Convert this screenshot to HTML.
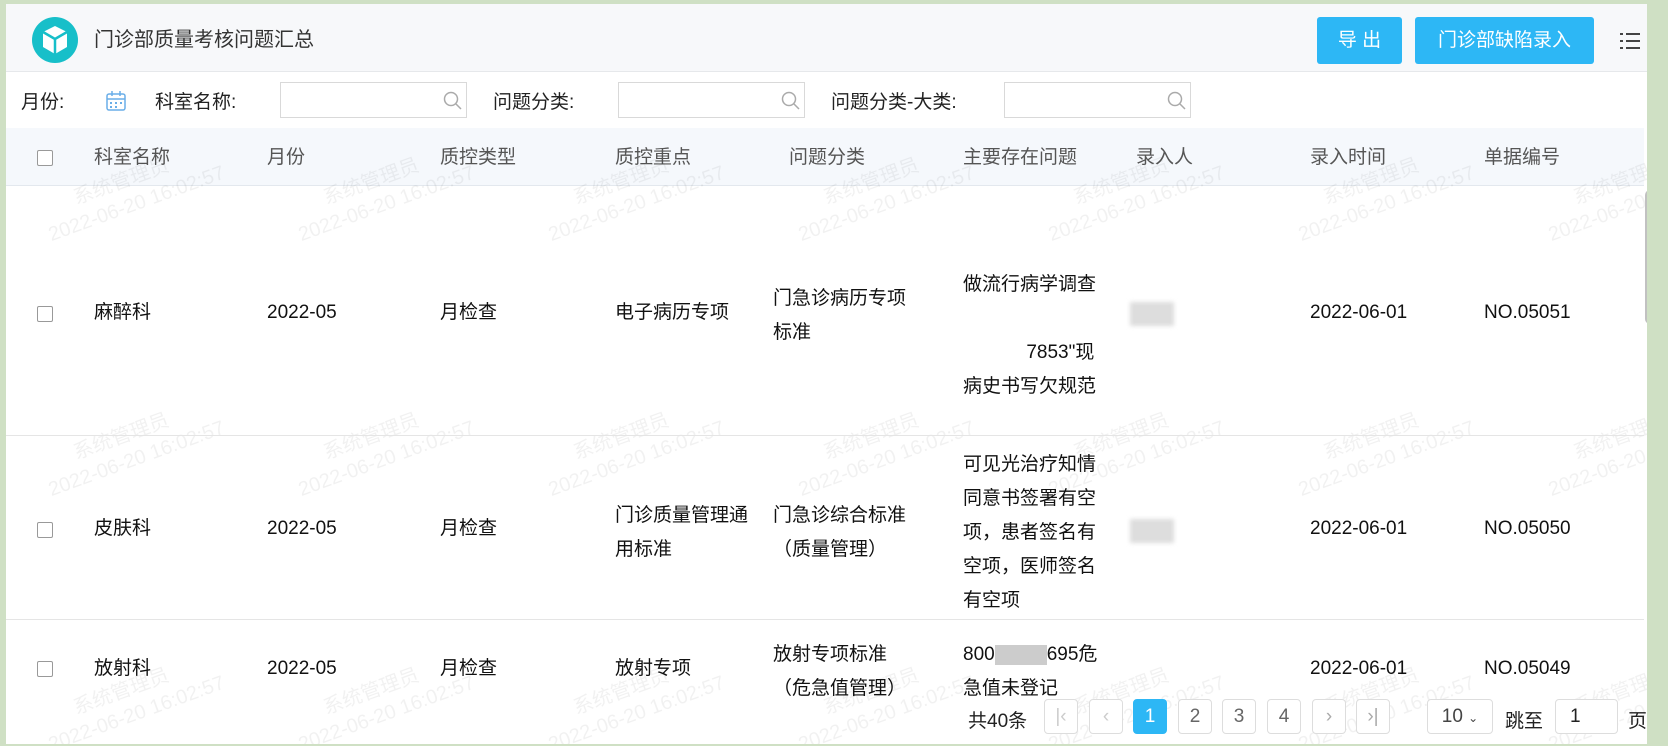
<!DOCTYPE html>
<html><head><meta charset="utf-8"><style>
*{margin:0;padding:0;box-sizing:border-box}
body{width:1668px;height:746px;overflow:hidden;background:#cfe0c4;font-family:"Liberation Sans","Noto Sans CJK SC",sans-serif;position:relative;color:#222}
.frame{position:absolute;left:6px;top:4px;width:1641px;height:740px;background:#fff;overflow:hidden}
.a{position:absolute;white-space:nowrap}
.hdr{position:absolute;left:0;top:0;width:1641px;height:68px;background:#f7f8fa;border-bottom:1px solid #e6e8eb}
.btn{position:absolute;background:#2db7f5;color:#fff;font-size:19px;text-align:center;border-radius:3px;height:47px;line-height:47px}
.lbl{font-size:19px;color:#222;line-height:26px}
.inp{position:absolute;height:36px;border:1px solid #d9d9d9;background:#fff}
.thead{position:absolute;left:0;top:124px;width:1638px;height:58px;background:#f5f8fc;border-bottom:1px solid #e3e8ee}
.th{font-size:19px;color:#555;line-height:26px}
.td{font-size:19px;color:#111;line-height:26px}
.cb{position:absolute;width:16px;height:16px;border:1px solid #999;border-radius:2px;background:#fff}
.line{position:absolute;left:0;width:1638px;height:1px;background:#e5e5e5}
.wm{position:absolute;color:rgba(0,0,0,0.055);font-size:20px;transform:rotate(-20deg);transform-origin:left top;line-height:26px;white-space:nowrap}
.pg{position:absolute;top:695px;width:34px;height:35px;border:1px solid #ddd;border-radius:4px;text-align:center;line-height:33px;font-size:19px;color:#666;background:#fff}
</style></head><body>
<div class="frame">
<div class="hdr"></div>
<svg class="a" style="left:26px;top:13px" width="46" height="46" viewBox="0 0 46 46"><circle cx="23" cy="23" r="23" fill="#17bfc9"/><path d="M23 9 L35 15 L35 30 L23 37 L11 30 L11 15 Z" fill="#fff"/><path d="M23 22 L23 37 M11 15 L23 22 L35 15" stroke="#17bfc9" stroke-width="2.5" fill="none"/></svg>
<div class="a" style="left:88px;top:23px;font-size:20px;color:#333;line-height:26px">门诊部质量考核问题汇总</div>
<div class="btn" style="left:1311px;top:13px;width:85px">导 出</div>
<div class="btn" style="left:1409px;top:13px;width:179px">门诊部缺陷录入</div>
<svg class="a" style="left:1614px;top:28px" width="20" height="18"><g fill="#444"><rect x="0" y="1" width="3" height="2"/><rect x="6" y="1" width="14" height="2"/><rect x="0" y="8" width="3" height="2"/><rect x="6" y="8" width="14" height="2"/><rect x="0" y="15" width="3" height="2"/><rect x="6" y="15" width="14" height="2"/></g></svg>

<div class="a lbl" style="left:15px;top:86px">月份:</div>
<svg class="a" style="left:100px;top:86px" width="20" height="22"><rect x="1" y="4" width="18" height="16" rx="2" fill="none" stroke="#6aaee8" stroke-width="1.5"/><line x1="1" y1="9" x2="19" y2="9" stroke="#6aaee8" stroke-width="1.5"/><line x1="6" y1="1" x2="6" y2="6" stroke="#6aaee8" stroke-width="1.5"/><line x1="14" y1="1" x2="14" y2="6" stroke="#6aaee8" stroke-width="1.5"/><g fill="#6aaee8"><rect x="4" y="12" width="2" height="2"/><rect x="9" y="12" width="2" height="2"/><rect x="14" y="12" width="2" height="2"/><rect x="4" y="16" width="2" height="2"/><rect x="9" y="16" width="2" height="2"/></g></svg>
<div class="a lbl" style="left:149px;top:86px">科室名称:</div>
<div class="inp" style="left:274px;top:78px;width:187px"></div>
<div class="a lbl" style="left:487px;top:86px">问题分类:</div>
<div class="inp" style="left:612px;top:78px;width:187px"></div>
<div class="a lbl" style="left:825px;top:86px">问题分类-大类:</div>
<div class="inp" style="left:998px;top:78px;width:187px"></div>
<svg class="a" style="left:437px;top:87px" width="20" height="20"><circle cx="8" cy="8" r="6.5" fill="none" stroke="#aaa" stroke-width="1.5"/><line x1="13" y1="13" x2="18" y2="18" stroke="#aaa" stroke-width="1.5"/></svg>
<svg class="a" style="left:775px;top:87px" width="20" height="20"><circle cx="8" cy="8" r="6.5" fill="none" stroke="#aaa" stroke-width="1.5"/><line x1="13" y1="13" x2="18" y2="18" stroke="#aaa" stroke-width="1.5"/></svg>
<svg class="a" style="left:1161px;top:87px" width="20" height="20"><circle cx="8" cy="8" r="6.5" fill="none" stroke="#aaa" stroke-width="1.5"/><line x1="13" y1="13" x2="18" y2="18" stroke="#aaa" stroke-width="1.5"/></svg>

<div class="thead"></div>
<div class="cb" style="left:31px;top:146px"></div>
<div class="a th" style="left:88px;top:141px">科室名称</div>
<div class="a th" style="left:261px;top:141px">月份</div>
<div class="a th" style="left:434px;top:141px">质控类型</div>
<div class="a th" style="left:609px;top:141px">质控重点</div>
<div class="a th" style="left:783px;top:141px">问题分类</div>
<div class="a th" style="left:957px;top:141px">主要存在问题</div>
<div class="a th" style="left:1130px;top:141px">录入人</div>
<div class="a th" style="left:1304px;top:141px">录入时间</div>
<div class="a th" style="left:1478px;top:141px">单据编号</div>

<div id="wms"></div>

<!-- row1 -->
<div class="cb" style="left:31px;top:302px"></div>
<div class="a td" style="left:88px;top:296px">麻醉科</div>
<div class="a td" style="left:261px;top:296px">2022-05</div>
<div class="a td" style="left:434px;top:296px">月检查</div>
<div class="a td" style="left:609px;top:296px">电子病历专项</div>
<div class="a td" style="left:767px;top:278px;line-height:34px">门急诊病历专项<br>标准</div>
<div class="a td" style="left:957px;top:264px;line-height:34px">做流行病学调查<br>&nbsp;<br>&nbsp;&nbsp;&nbsp;&nbsp;&nbsp;&nbsp;&nbsp;&nbsp;&nbsp;&nbsp;&nbsp;&nbsp;7853"现<br>病史书写欠规范</div>
<div class="a" style="left:1124px;top:298px;width:44px;height:24px;background:#ddd;filter:blur(2px)"></div>
<div class="a td" style="left:1304px;top:296px">2022-06-01</div>
<div class="a td" style="left:1478px;top:296px">NO.05051</div>
<div class="line" style="top:431px"></div>

<!-- row2 -->
<div class="cb" style="left:31px;top:518px"></div>
<div class="a td" style="left:88px;top:512px">皮肤科</div>
<div class="a td" style="left:261px;top:512px">2022-05</div>
<div class="a td" style="left:434px;top:512px">月检查</div>
<div class="a td" style="left:609px;top:495px;line-height:34px">门诊质量管理通<br>用标准</div>
<div class="a td" style="left:767px;top:495px;line-height:34px">门急诊综合标准<br>（质量管理）</div>
<div class="a td" style="left:957px;top:444px;line-height:34px">可见光治疗知情<br>同意书签署有空<br>项，患者签名有<br>空项，医师签名<br>有空项</div>
<div class="a" style="left:1124px;top:515px;width:44px;height:24px;background:#ddd;filter:blur(2px)"></div>
<div class="a td" style="left:1304px;top:512px">2022-06-01</div>
<div class="a td" style="left:1478px;top:512px">NO.05050</div>
<div class="line" style="top:615px"></div>

<!-- row3 -->
<div class="cb" style="left:31px;top:657px"></div>
<div class="a td" style="left:88px;top:652px">放射科</div>
<div class="a td" style="left:261px;top:652px">2022-05</div>
<div class="a td" style="left:434px;top:652px">月检查</div>
<div class="a td" style="left:609px;top:652px">放射专项</div>
<div class="a td" style="left:767px;top:634px;line-height:34px">放射专项标准<br>（危急值管理）</div>
<div class="a td" style="left:957px;top:634px;line-height:34px">800<span style="display:inline-block;width:52px;height:20px;background:#ccc;vertical-align:middle"></span>695危<br>急值未登记</div>
<div class="a td" style="left:1304px;top:652px">2022-06-01</div>
<div class="a td" style="left:1478px;top:652px">NO.05049</div>

<div class="a" style="left:1639px;top:186px;width:10px;height:134px;background:#c1c1c1;border-radius:5px"></div>

<div class="a" style="left:962px;top:705px;font-size:19px;color:#222;line-height:26px">共40条</div>
<div class="pg" style="left:1038px;color:#ccc">|&lsaquo;</div>
<div class="pg" style="left:1083px;color:#ccc">&lsaquo;</div>
<div class="pg" style="left:1127px;background:#2db7f5;border-color:#2db7f5;color:#fff">1</div>
<div class="pg" style="left:1172px">2</div>
<div class="pg" style="left:1216px">3</div>
<div class="pg" style="left:1261px">4</div>
<div class="pg" style="left:1306px;color:#aaa">&rsaquo;</div>
<div class="pg" style="left:1350px;color:#aaa">&rsaquo;|</div>
<div class="pg" style="left:1421px;width:66px;color:#444">10 <span style="font-size:12px">&#8964;</span></div>
<div class="a" style="left:1499px;top:705px;font-size:19px;color:#222;line-height:26px">跳至</div>
<div class="pg" style="left:1549px;width:63px;text-align:left;padding-left:14px;color:#222">1</div>
<div class="a" style="left:1622px;top:705px;font-size:19px;color:#222;line-height:26px">页</div>
</div>
<script>
var h='';for(var r=0;r<4;r++)for(var c=0;c<7;c++){var x=30+c*250,y=-60+r*255;h+='<div class="wm" style="left:'+x+'px;top:'+y+'px"><span style="padding-left:36px">系统管理员</span><br>2022-06-20 16:02:57</div>';}
document.getElementById('wms').innerHTML=h;
</script>
</body></html>
